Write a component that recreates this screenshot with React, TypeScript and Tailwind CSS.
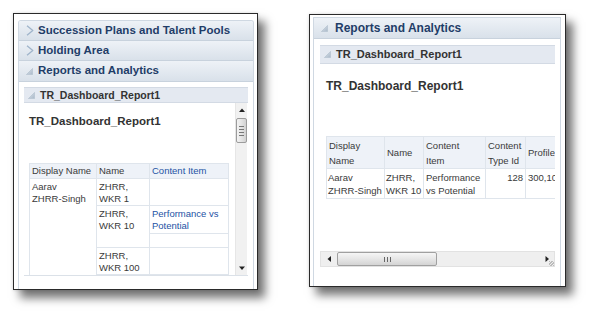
import React from "react";

const ClosedIcon = () => (
  <svg width="8" height="11" viewBox="0 0 8 11" className="shrink-0">
    <path d="M1 0.8 L6.8 5.5 L1 10.2" fill="none" stroke="#9fb4ca" strokeWidth="1.3" strokeLinejoin="round" />
  </svg>
);

const OpenIcon = ({ s = 8 }: { s?: number }) => (
  <svg width={s} height={s} viewBox="0 0 8 8" className="shrink-0">
    <defs>
      <linearGradient id="og" x1="0" y1="0" x2="1" y2="1">
        <stop offset="0" stopColor="#dfe6ee" />
        <stop offset="1" stopColor="#a9b8c8" />
      </linearGradient>
    </defs>
    <path d="M7.5 0.5 L7.5 7.5 L0.5 7.5 Z" fill="url(#og)" stroke="#b3c1cf" strokeWidth="0.8" />
  </svg>
);

const Tri = ({ dir }: { dir: "up" | "down" | "left" | "right" }) => {
  const d =
    dir === "up"
      ? "M0 4 L3 0.5 L6 4 Z"
      : dir === "down"
      ? "M0 0.5 L3 4 L6 0.5 Z"
      : dir === "left"
      ? "M4 0 L0.5 3 L4 6 Z"
      : "M0.5 0 L4 3 L0.5 6 Z";
  const w = dir === "up" || dir === "down" ? 6 : 4.5;
  const h = dir === "up" || dir === "down" ? 4.5 : 6;
  return (
    <svg width={w} height={h} viewBox={`0 0 ${w} ${h}`}>
      <path d={d} fill="#222" />
    </svg>
  );
};

const AccHeader = ({ title, open, h }: { title: string; open?: boolean; h: string }) => (
  <div
    className={`${h} flex items-center border-b border-[#c8d2dd] bg-gradient-to-b from-[#eef2f7] to-[#d9e1ea] pl-[7px]`}
  >
    <div className="w-[7px] flex justify-center">{open ? <OpenIcon s={7} /> : <ClosedIcon />}</div>
    <span className="ml-[5px] font-bold text-[#1f3d68] text-[11.5px] leading-none whitespace-nowrap">{title}</span>
  </div>
);

const SubHeader = ({ h, text }: { h: string; text: string }) => (
  <div className={`${h} flex items-center bg-[#e4e9f1] border-t border-b border-[#d3dae4] pl-[4px]`}>
    <OpenIcon s={7} />
    <span className={`ml-[5px] font-bold text-[#333] ${text} leading-none whitespace-nowrap`}>TR_Dashboard_Report1</span>
  </div>
);

const td = "border border-[#dfe5ec] align-top px-[2px] pt-[2px] text-[9.5px] leading-[12px] text-[#3a3a3a]";
const th = "border border-[#dfe5ec] bg-[#eef2f8] px-[2px] text-[9.5px] leading-[12px] font-normal text-left text-[#3a3a3a]";

export default function App() {
  return (
    <div className="w-[595px] h-[322px] bg-white font-['Liberation_Sans',Arial,sans-serif] flex items-start pt-[13px] pl-[13px] overflow-hidden">
      {/* Left panel */}
      <div className="w-[245px] h-[277px] shrink-0 border border-[#2a2a2a] bg-white shadow-[7px_8px_9px_rgba(0,0,0,0.55),0_0_3px_rgba(0,0,0,0.15)] pt-[6px] pl-[4px] pr-[3px] flex flex-col">
        <div className="flex-1 border border-[#cfd8e2] border-b-0 rounded-t-[3px] flex flex-col overflow-hidden">
          <AccHeader title="Succession Plans and Talent Pools" h="h-[20px]" />
          <AccHeader title="Holding Area" h="h-[20px]" />
          <AccHeader title="Reports and Analytics" open h="h-[21px]" />
          <div className="pt-[5px] pl-[5px] pr-[5px] flex flex-col">
            <SubHeader h="h-[16px]" text="text-[10.5px]" />
            <div className="h-[173px] flex border-b border-[#dbe1e8]">
              <div className="flex-1 overflow-hidden pl-[5px] pt-[11px]">
                <div className="font-bold text-[11.5px] leading-[14px] text-[#333] whitespace-nowrap">TR_Dashboard_Report1</div>
                <table className="mt-[35px] border-collapse table-fixed w-[199px]">
                  <colgroup>
                    <col className="w-[67px]" />
                    <col className="w-[53px]" />
                    <col className="w-[79px]" />
                  </colgroup>
                  <thead>
                    <tr className="h-[15px]">
                      <th className={th}>Display Name</th>
                      <th className={th}>Name</th>
                      <th className={`${th} !text-[#2452a4]`}>Content Item</th>
                    </tr>
                  </thead>
                  <tbody>
                    <tr className="h-[26px]">
                      <td className={`${td} border-b-0`} rowSpan={4}>
                        Aarav
                        <br />
                        ZHRR-Singh
                      </td>
                      <td className={td}>
                        ZHRR,
                        <br />
                        WKR 1
                      </td>
                      <td className={td}></td>
                    </tr>
                    <tr className="h-[28px]">
                      <td className={td} rowSpan={2}>
                        ZHRR,
                        <br />
                        WKR 10
                      </td>
                      <td className={`${td} text-[#2452a4]`}>
                        Performance vs
                        <br />
                        Potential
                      </td>
                    </tr>
                    <tr className="h-[14px]">
                      <td className={td}></td>
                    </tr>
                    <tr className="h-[27px]">
                      <td className={td}>
                        ZHRR,
                        <br />
                        WKR 100
                      </td>
                      <td className={td}></td>
                    </tr>
                  </tbody>
                </table>
              </div>
              {/* vertical scrollbar */}
              <div className="w-[12px] mr-[1px] bg-[#f1f1f1] border-l border-[#e6e6e6] flex flex-col items-center">
                <div className="h-[15px] flex items-center justify-center">
                  <Tri dir="up" />
                </div>
                <div className="w-[11px] h-[25px] rounded-[2px] border border-[#9c9c9c] bg-gradient-to-r from-[#f4f4f4] via-[#e4e4e4] to-[#d2d2d2] flex flex-col items-center justify-center gap-[2px]">
                  <div className="w-[5px] h-px bg-[#777]" />
                  <div className="w-[5px] h-px bg-[#777]" />
                  <div className="w-[5px] h-px bg-[#777]" />
                  <div className="w-[5px] h-px bg-[#777]" />
                </div>
                <div className="flex-1" />
                <div className="h-[14px] w-full flex items-center justify-center">
                  <Tri dir="down" />
                </div>
              </div>
            </div>
          </div>
        </div>
      </div>

      {/* Right panel */}
      <div className="ml-[51px] mt-[1px] w-[257px] h-[273px] shrink-0 border border-[#2a2a2a] bg-white shadow-[7px_8px_9px_rgba(0,0,0,0.55),0_0_3px_rgba(0,0,0,0.15)] pt-[2px] pl-[3px] pr-[4px] flex flex-col">
        <div className="flex-1 border border-[#cfd8e2] border-b-0 flex flex-col overflow-hidden">
          <div className="h-[21px] flex items-center border-b border-[#c8d2dd] bg-gradient-to-b from-[#eef2f7] to-[#d9e1ea] pl-[7px]">
            <OpenIcon s={7} />
            <span className="ml-[7px] font-bold text-[#1f3d68] text-[12px] leading-none whitespace-nowrap">
              Reports and Analytics
            </span>
          </div>
          <div className="pt-[6px] pl-[6px] pr-[5px] flex flex-col">
            <SubHeader h="h-[19px]" text="text-[11px]" />
            <div className="h-[187px] overflow-hidden pl-[6px] pt-[15px]">
              <div className="font-bold text-[12px] leading-[14px] text-[#333] whitespace-nowrap">TR_Dashboard_Report1</div>
              <table className="mt-[43px] border-collapse table-fixed w-[250px]">
                <colgroup>
                  <col className="w-[58px]" />
                  <col className="w-[39px]" />
                  <col className="w-[62px]" />
                  <col className="w-[40px]" />
                  <col className="w-[51px]" />
                </colgroup>
                <thead>
                  <tr className="h-[32px]">
                    <th className={`${th} leading-[15px]`}>
                      Display
                      <br />
                      Name
                    </th>
                    <th className={th}>Name</th>
                    <th className={`${th} leading-[15px]`}>
                      Content
                      <br />
                      Item
                    </th>
                    <th className={`${th} leading-[15px] whitespace-nowrap`}>
                      Content
                      <br />
                      Type Id
                    </th>
                    <th className={th}>Profile</th>
                  </tr>
                </thead>
                <tbody>
                  <tr className="h-[30px]">
                    <td className={`${td} leading-[13px] whitespace-nowrap !px-[1px]`}>
                      Aarav
                      <br />
                      ZHRR-Singh
                    </td>
                    <td className={`${td} leading-[13px] whitespace-nowrap !px-[1px]`}>
                      ZHRR,
                      <br />
                      WKR 10
                    </td>
                    <td className={`${td} leading-[13px] whitespace-nowrap`}>
                      Performance
                      <br />
                      vs Potential
                    </td>
                    <td className={`${td} leading-[13px] text-right`}>128</td>
                    <td className={`${td} leading-[13px] whitespace-nowrap`}>300,100</td>
                  </tr>
                </tbody>
              </table>
            </div>
            {/* horizontal scrollbar */}
            <div className="h-[16px] flex items-center bg-[#efefef] border border-[#e2e2e2]">
              <div className="w-[16px] flex items-center justify-center">
                <Tri dir="left" />
              </div>
              <div className="w-[100px] h-[14px] rounded-[2px] border border-[#a0a0a0] bg-gradient-to-b from-[#f6f6f6] via-[#e6e6e6] to-[#d4d4d4] flex items-center justify-center gap-[2px]">
                <div className="w-px h-[5px] bg-[#666]" />
                <div className="w-px h-[5px] bg-[#666]" />
                <div className="w-px h-[5px] bg-[#666]" />
              </div>
              <div className="flex-1" />
              <div className="w-[14px] h-full flex items-center justify-center relative">
                <Tri dir="right" />
                <div className="absolute right-0 bottom-0 w-[5px] h-[5px] bg-[repeating-linear-gradient(135deg,#bbb_0_1px,transparent_1px_2px)]" />
              </div>
            </div>
          </div>
        </div>
      </div>
    </div>
  );
}
